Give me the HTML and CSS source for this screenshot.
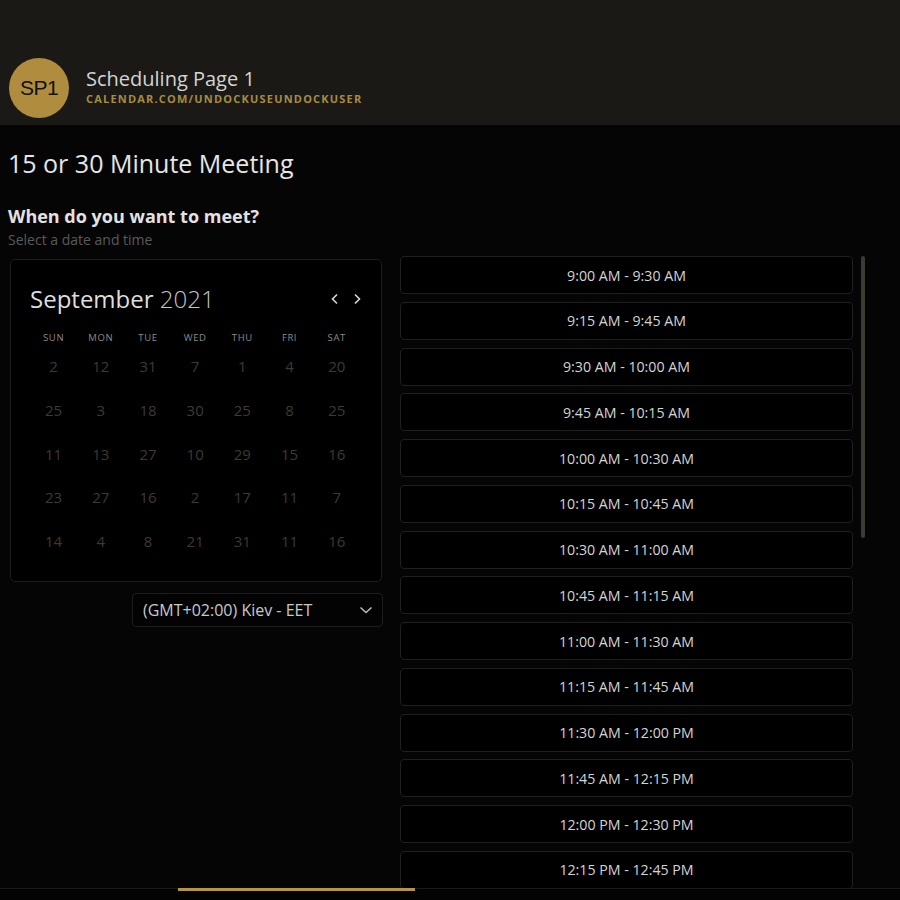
FILE: index.html
```html
<!DOCTYPE html>
<html lang="en">
<head>
<meta charset="utf-8">
<title>Scheduling Page 1</title>
<link rel="stylesheet" href="styles.css">
</head>
<body>
<header class="top">
  <div class="avatar">SP1</div>
  <div class="top-text">
    <div class="page-title">Scheduling Page 1</div>
    <div class="page-url">CALENDAR.COM/UNDOCKUSEUNDOCKUSER</div>
  </div>
</header>
<main class="main">
  <h1 class="meeting">15 or 30 Minute Meeting</h1>
  <h2 class="question">When do you want to meet?</h2>
  <p class="hint">Select a date and time</p>
  <div class="content">
    <section class="left">
      <div class="calendar">
        <div class="cal-head">
          <div class="cal-title"><span class="month">September</span> <span class="year">2021</span></div>
          <div class="cal-nav">
            <svg width="10" height="12" viewBox="0 0 10 12"><path d="M7 1.5 L2.5 6 L7 10.5" fill="none" stroke="#d8d8d8" stroke-width="1.6"/></svg>
            <svg width="10" height="12" viewBox="0 0 10 12"><path d="M3 1.5 L7.5 6 L3 10.5" fill="none" stroke="#d8d8d8" stroke-width="1.6"/></svg>
          </div>
        </div>
        <div class="cal-grid">
          <div class="dow">SUN</div><div class="dow">MON</div><div class="dow">TUE</div><div class="dow">WED</div><div class="dow">THU</div><div class="dow">FRI</div><div class="dow">SAT</div>
          <div class="day">2</div><div class="day">12</div><div class="day">31</div><div class="day">7</div><div class="day">1</div><div class="day">4</div><div class="day">20</div>
          <div class="day">25</div><div class="day">3</div><div class="day">18</div><div class="day">30</div><div class="day">25</div><div class="day">8</div><div class="day">25</div>
          <div class="day">11</div><div class="day">13</div><div class="day">27</div><div class="day">10</div><div class="day">29</div><div class="day">15</div><div class="day">16</div>
          <div class="day">23</div><div class="day">27</div><div class="day">16</div><div class="day">2</div><div class="day">17</div><div class="day">11</div><div class="day">7</div>
          <div class="day">14</div><div class="day">4</div><div class="day">8</div><div class="day">21</div><div class="day">31</div><div class="day">11</div><div class="day">16</div>
        </div>
      </div>
      <div class="tz">
        <span>(GMT+02:00) Kiev - EET</span>
        <svg width="14" height="8" viewBox="0 0 14 8"><path d="M1.5 1.5 L7 6.5 L12.5 1.5" fill="none" stroke="#bdbdbd" stroke-width="1.5"/></svg>
      </div>
    </section>
    <section class="right">
      <div class="slots">
        <div class="slot">9:00 AM - 9:30 AM</div>
        <div class="slot">9:15 AM - 9:45 AM</div>
        <div class="slot">9:30 AM - 10:00 AM</div>
        <div class="slot">9:45 AM - 10:15 AM</div>
        <div class="slot">10:00 AM - 10:30 AM</div>
        <div class="slot">10:15 AM - 10:45 AM</div>
        <div class="slot">10:30 AM - 11:00 AM</div>
        <div class="slot">10:45 AM - 11:15 AM</div>
        <div class="slot">11:00 AM - 11:30 AM</div>
        <div class="slot">11:15 AM - 11:45 AM</div>
        <div class="slot">11:30 AM - 12:00 PM</div>
        <div class="slot">11:45 AM - 12:15 PM</div>
        <div class="slot">12:00 PM - 12:30 PM</div>
        <div class="slot">12:15 PM - 12:45 PM</div>
      </div>
      <div class="track"><div class="thumb"></div></div>
    </section>
  </div>
</main>
<footer class="bottom"><div class="progress"></div></footer>
</body>
</html>
```
FILE: styles.css
```css
* { box-sizing: border-box; }
html, body { margin: 0; padding: 0; }
body {
  width: 900px;
  height: 900px;
  overflow: hidden;
  background: #050505;
  font-family: "Open Sans", "Noto Sans", sans-serif;
  color: #d8d8d8;
  display: flex;
  flex-direction: column;
}
.top {
  height: 125px;
  flex: none;
  background: #1a1915;
  display: flex;
  align-items: center;
  padding: 51px 0 0 9px;
}
.avatar {
  width: 60px;
  height: 60px;
  border-radius: 50%;
  background: #b08d3e;
  color: #111;
  font-family: "Liberation Sans", Arial, sans-serif;
  font-size: 21px;
  display: flex;
  align-items: center;
  justify-content: center;
  letter-spacing: -0.5px;
}
.top-text { margin-left: 17px; }
.page-title {
  font-size: 20px;
  line-height: 24px;
  color: #d4d4d4;
  margin-top: -3px;
}
.page-url {
  font-size: 11px;
  line-height: 14px;
  font-weight: 700;
  color: #a88b42;
  letter-spacing: 1.2px;
  margin-top: 1px;
}
.main {
  flex: 1;
  min-height: 0;
  display: flex;
  flex-direction: column;
  padding: 0 0 0 8px;
}
.meeting {
  margin: 22px 0 0;
  font-size: 25px;
  line-height: 32px;
  font-weight: 400;
  color: #e6e6e6;
}
.question {
  margin: 26px 0 0;
  font-size: 18px;
  line-height: 23px;
  font-weight: 700;
  color: #e2e2e2;
}
.hint {
  margin: 2px 0 0;
  font-size: 14px;
  line-height: 19px;
  color: #5a5a5a;
}
.content {
  flex: 1;
  min-height: 0;
  display: flex;
  margin-top: 6px;
  padding-left: 2px;
}
.left {
  width: 373px;
  flex: none;
  display: flex;
  flex-direction: column;
  align-items: flex-end;
  padding-top: 4px;
}
.calendar {
  width: 372px;
  height: 323px;
  align-self: flex-start;
  border: 1px solid #1d1d1d;
  border-radius: 5px;
  background: #000;
  padding: 24px 22px 0 19px;
}
.cal-head {
  display: flex;
  align-items: center;
  justify-content: space-between;
  height: 30px;
}
.cal-title { font-size: 24px; line-height: 30px; }
.month { color: #dedede; }
.year { color: #c4c4c4; font-weight: 300; }
.cal-nav {
  display: flex;
  gap: 12px;
  margin-right: -3px;
}
.cal-nav svg { display: block; }
.cal-grid {
  margin-top: 17px;
  display: grid;
  grid-template-columns: repeat(7, 47.2px);
  grid-auto-rows: 43.75px;
  grid-template-rows: 14px;
}
.dow {
  font-size: 9.5px;
  line-height: 14px;
  letter-spacing: 0.6px;
  text-align: center;
  color: #8a8a8a;
}
.day {
  font-size: 15px;
  line-height: 43px;
  text-align: center;
  color: #3d3a33;
}
.tz {
  margin-top: 11px;
  width: 251px;
  height: 34px;
  border: 1px solid #1d1d1d;
  border-radius: 4px;
  background: #030303;
  display: flex;
  align-items: center;
  justify-content: space-between;
  padding: 0 9px 0 10px;
  font-size: 16px;
  color: #c8c8c8;
}
.tz svg { display: block; }
.right {
  margin-left: 17px;
  width: 466px;
  flex: none;
  display: flex;
  min-height: 0;
  padding-top: 1px;
}
.slots {
  width: 453px;
  flex: none;
  overflow: hidden;
  display: flex;
  flex-direction: column;
  gap: 7.75px;
}
.slot {
  flex: none;
  height: 38px;
  border: 1px solid #1f1f1f;
  border-radius: 4px;
  background: #000;
  display: flex;
  align-items: center;
  justify-content: center;
  font-size: 14.2px;
  color: #d4d4d4;
}
.track {
  flex: none;
  width: 13px;
  padding-left: 8px;
}
.thumb {
  width: 4px;
  height: 282px;
  background: #3c3a32;
  border-radius: 2px;
}
.bottom {
  flex: none;
  height: 12px;
  border-top: 1px solid #1a1a1a;
  background: #030303;
}
.progress {
  margin: -1px 0 0 178px;
  width: 237px;
  height: 3px;
  background: #b59545;
}
```
